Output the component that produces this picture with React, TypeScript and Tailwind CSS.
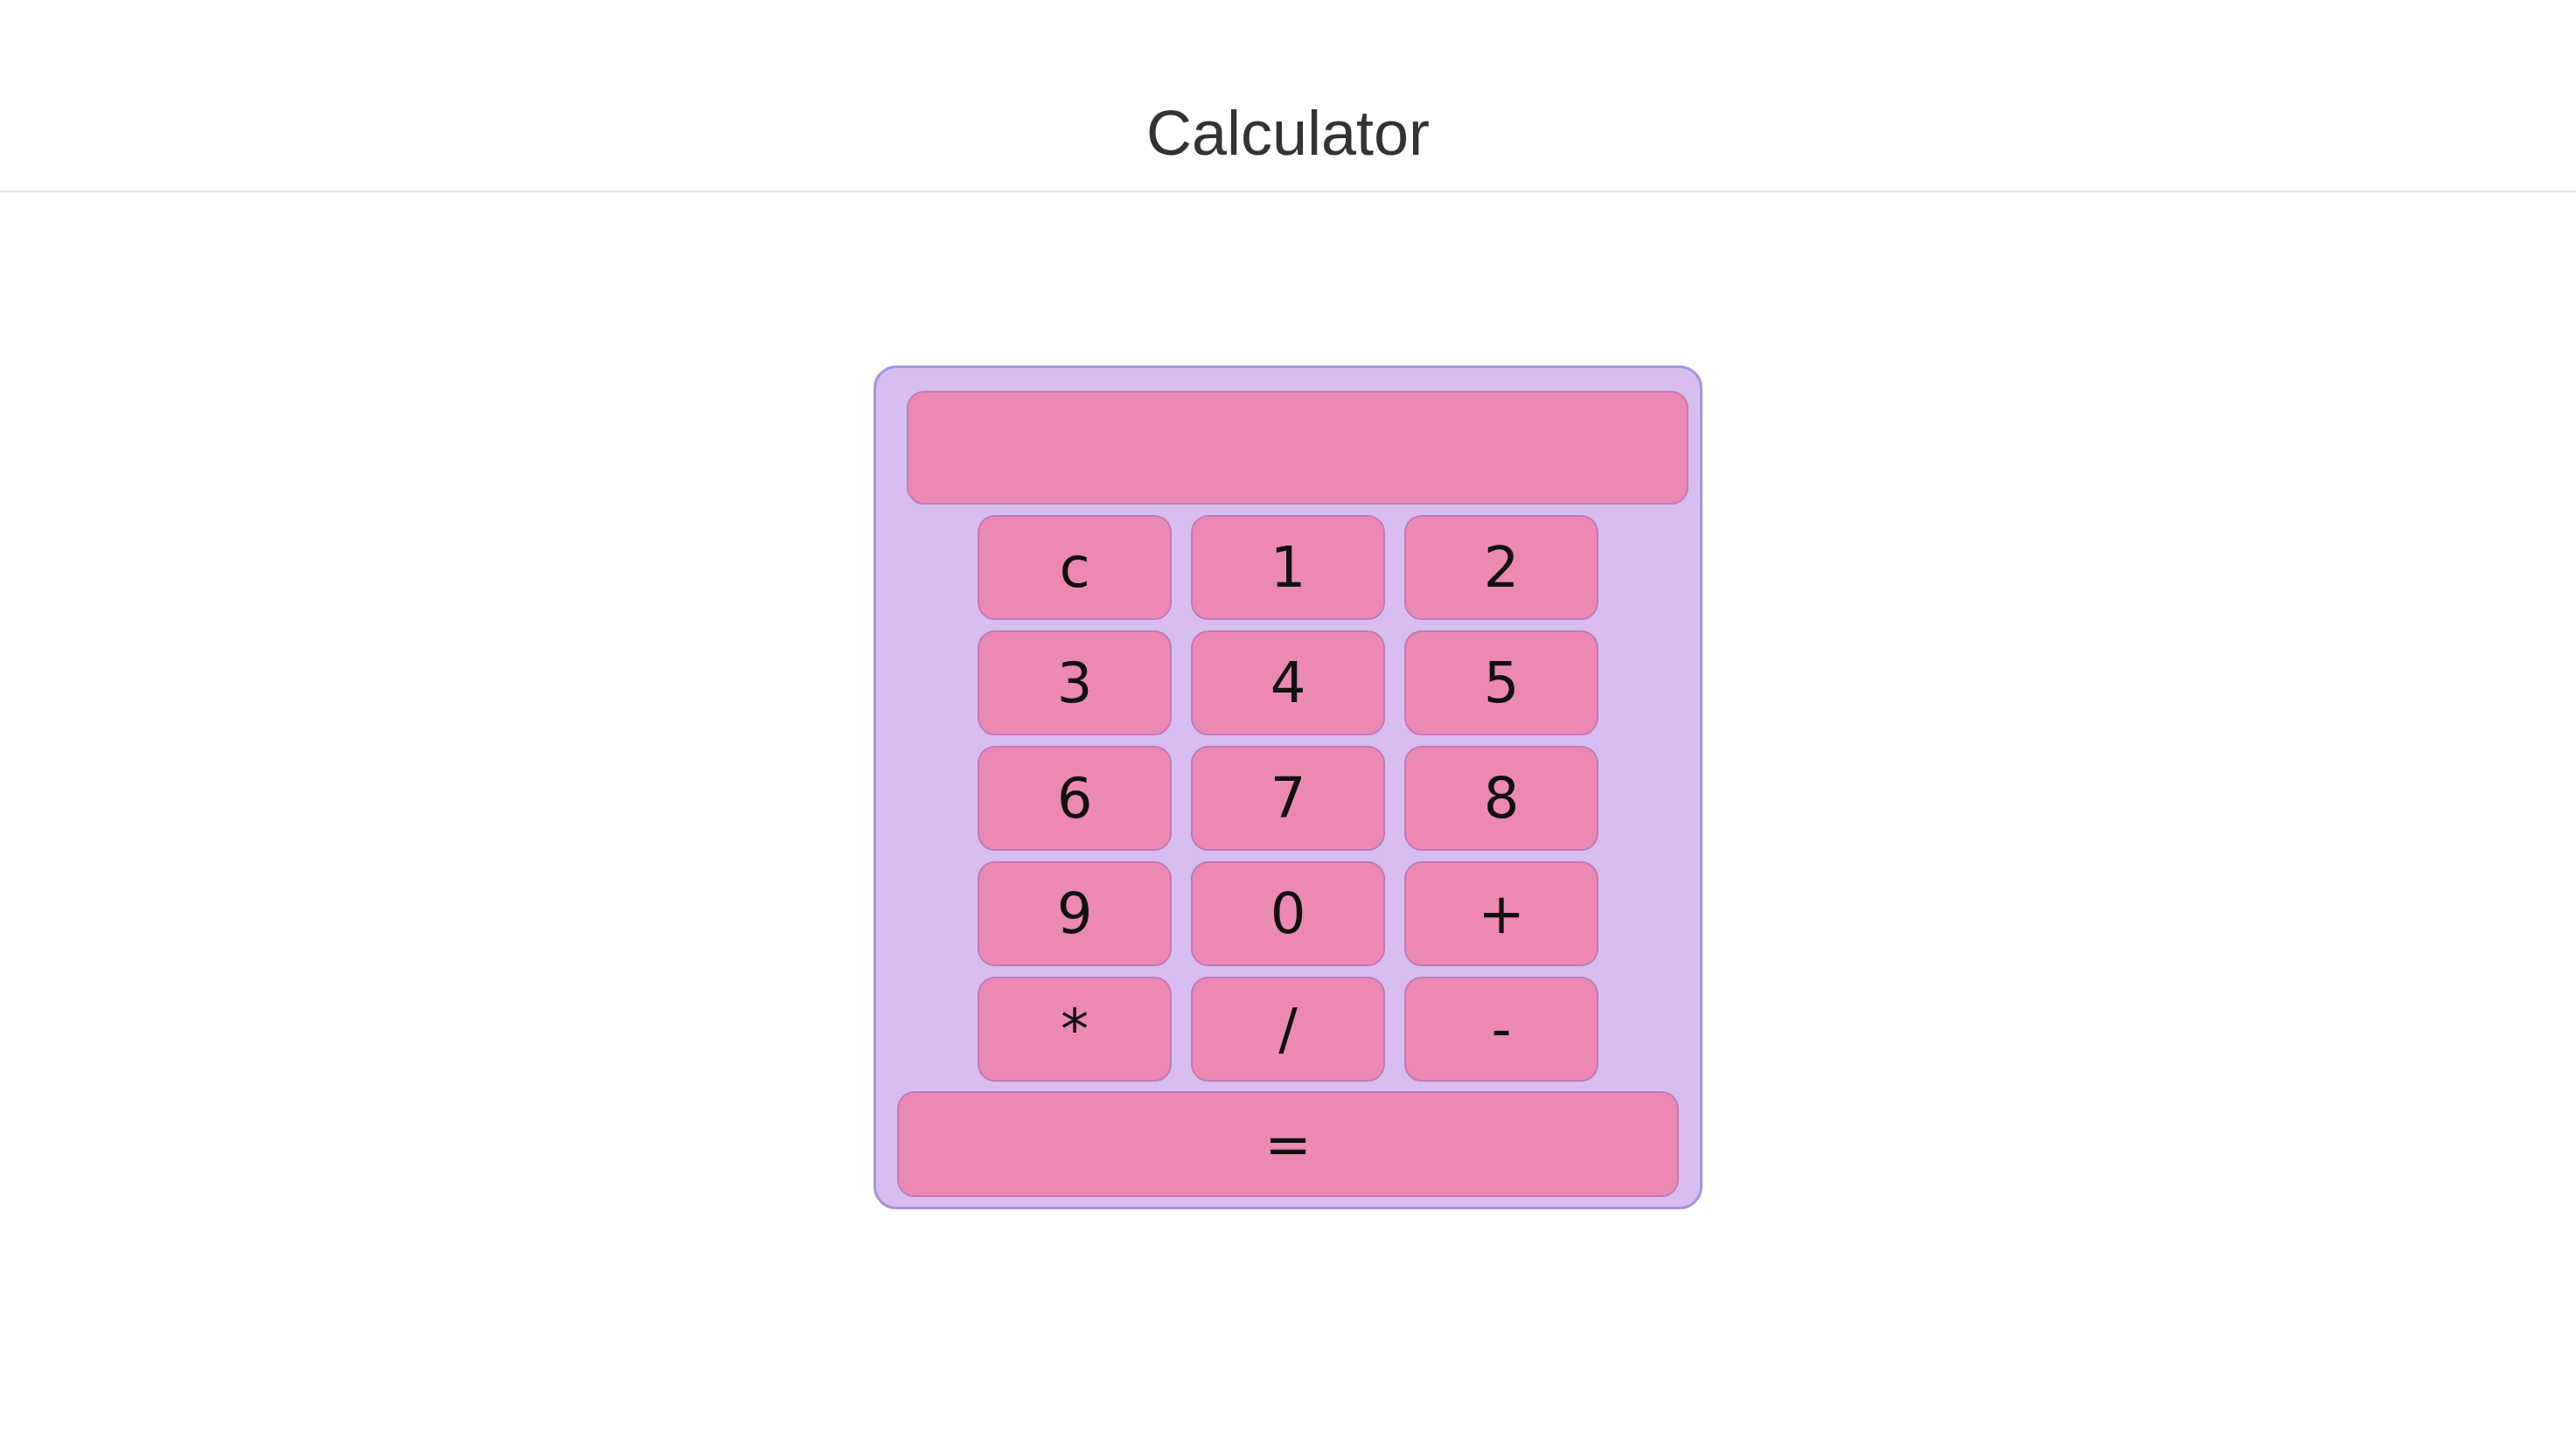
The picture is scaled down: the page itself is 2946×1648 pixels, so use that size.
import { useState } from "react"

const KEYS = ["c", "1", "2", "3", "4", "5", "6", "7", "8", "9", "0", "+", "*", "/", "-"]

const keyClass =
    "flex items-center justify-center rounded-[20px] border-2 border-[#c27ab6] bg-[#ec89b3] text-[#111111] cursor-pointer"

const App = () => {
    const [display, setDisplay] = useState("")

    const handleKey = (key: string) => {
        if (key === "c") {
            setDisplay("")
            return
        }
        setDisplay((prev) => prev + key)
    }

    const handleEquals = () => {
        try {
            // eslint-disable-next-line no-new-func
            const result = Function(`"use strict"; return (${display})`)()
            setDisplay(String(result))
        } catch {
            setDisplay("Error")
        }
    }

    return (
        <div className="min-h-screen bg-white font-['Liberation_Sans',Arial,sans-serif]">
            <header className="border-b-2 border-[#e3e3e3] pt-[111px] pb-[25px]">
                <h1 className="text-center text-[72px] leading-[82px] text-[#333333]">Calculator</h1>
            </header>

            <main className="flex justify-center pt-[198px]">
                <div className="w-[948px] rounded-[26px] border-[3px] border-[#a695dc] bg-[#d8bdf3] font-['DejaVu_Sans',Verdana,sans-serif]">
                    <div className="mt-[26px] ml-[35px] flex h-[130px] w-[894px] items-center justify-end rounded-[20px] border-2 border-[#c27ab6] bg-[#ec89b3] px-6 text-[56px] text-[#111111]">
                        {display}
                    </div>

                    <div className="mt-[12px] grid grid-cols-[repeat(3,222px)] justify-center gap-x-[22px] gap-y-[12px]">
                        {KEYS.map((key) => (
                            <button
                                key={key}
                                onClick={() => handleKey(key)}
                                className={`${keyClass} h-[120px] w-[222px] text-[64px] leading-none`}
                            >
                                {key}
                            </button>
                        ))}
                    </div>

                    <button
                        onClick={handleEquals}
                        className={`${keyClass} mt-[11px] mb-[11px] ml-[24px] h-[121px] w-[894px] text-[64px] leading-none`}
                    >
                        =
                    </button>
                </div>
            </main>
        </div>
    )
}

export default App
